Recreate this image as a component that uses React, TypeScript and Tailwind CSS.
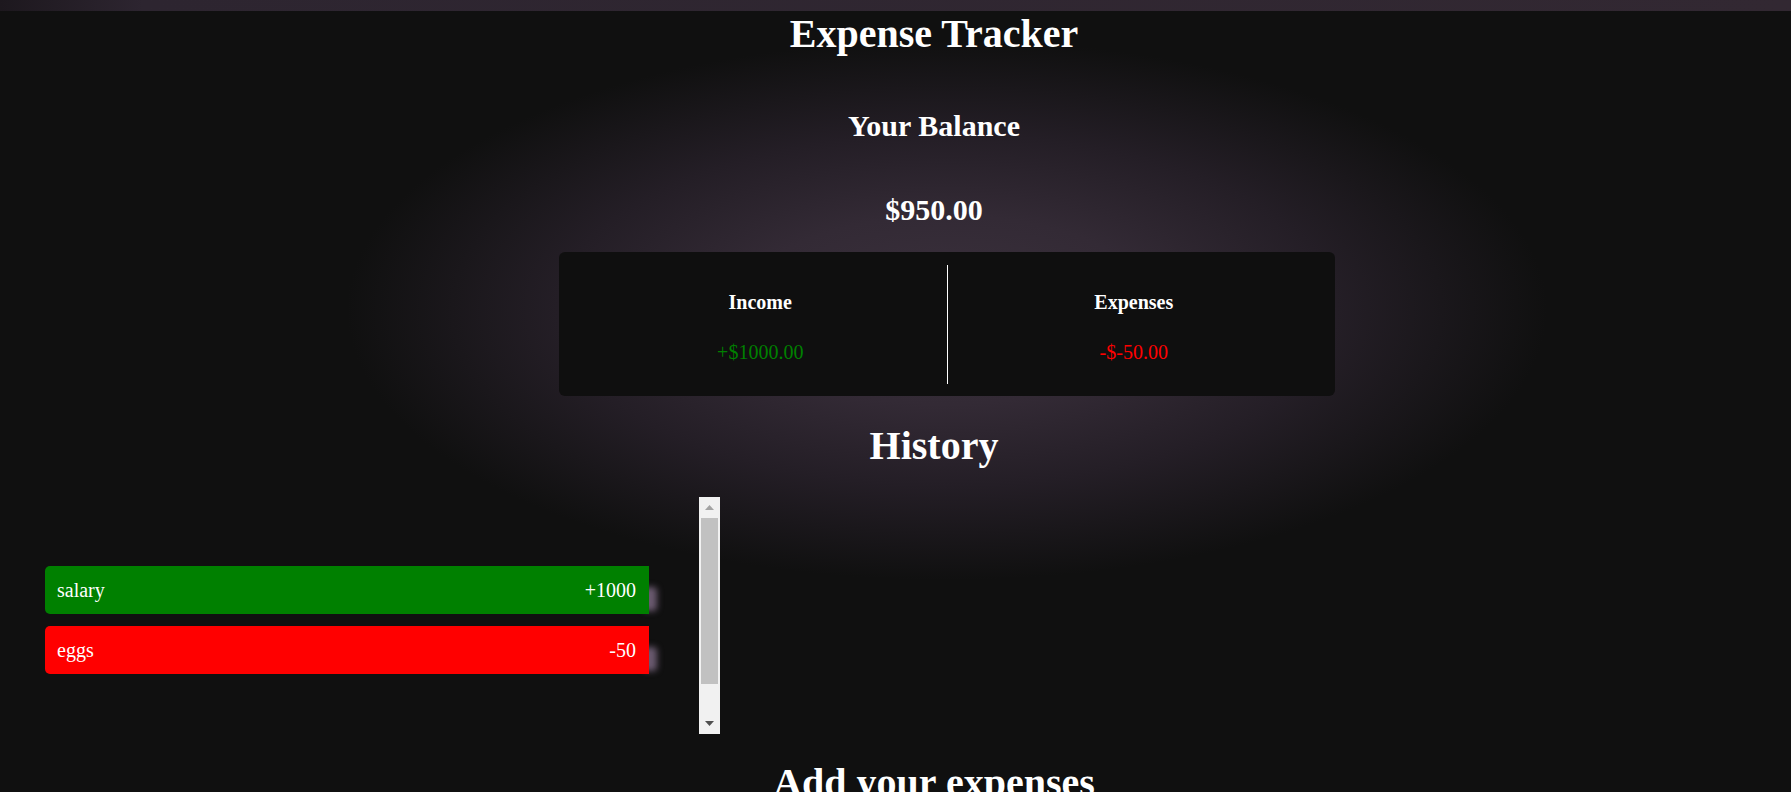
import React from "react";

const serif = { fontFamily: '"Liberation Serif", "Times New Roman", serif' };

function Item({ name, amount, color }: { name: string; amount: string; color: string }) {
  return (
    <div className="relative h-[48px] w-[604px]">
      <div className="absolute right-[-8px] top-[21px] h-[24px] w-[14px] rounded-sm bg-[#6a5a6f] blur-[3px]" />
      <div
        className={`relative z-10 flex h-full items-center justify-between rounded-l-[5px] pl-[12px] pr-[13px] text-[20px] text-white ${color}`}
      >
        <span>{name}</span>
        <span>{amount}</span>
      </div>
    </div>
  );
}

function FakeScrollbar() {
  return (
    <div className="flex h-[237px] w-[21px] flex-col items-center bg-[#f1f1f1]">
      <div className="flex h-[21px] w-full items-center justify-center">
        <svg width="9" height="5" viewBox="0 0 9 5">
          <polygon points="4.5,0 9,5 0,5" fill="#a3a3a3" />
        </svg>
      </div>
      <div className="h-[166px] w-[17px] bg-[#c1c1c1]" />
      <div className="flex-1" />
      <div className="flex h-[21px] w-full items-center justify-center">
        <svg width="9" height="5" viewBox="0 0 9 5">
          <polygon points="0,0 9,0 4.5,5" fill="#505050" />
        </svg>
      </div>
    </div>
  );
}

export default function App() {
  return (
    <div className="relative h-[792px] w-full overflow-hidden bg-[#101010] text-white" style={serif}>
      <div className="absolute inset-0 bg-[radial-gradient(ellipse_600px_270px_at_947px_310px,#3b313d_0%,#332a35_35%,#241e26_65%,#101010_100%)]" />
      <div className="relative flex flex-col">
        <div className="h-[11px] w-full bg-[linear-gradient(90deg,#1d181e_0%,#2d2530_8%,#322832_100%)]" />
        <div className="flex flex-col items-center pl-[77px]">
          <h1 className="text-[40px] font-bold leading-[46px]">Expense Tracker</h1>
          <h2 className="mt-[52px] text-[30px] font-bold leading-[34px]">Your Balance</h2>
          <h2 className="mt-[50px] text-[30px] font-bold leading-[34px]">$950.00</h2>
          <div className="ml-[26px] mt-[25px] flex h-[144px] w-[776px] rounded-[6px] bg-[#0f0f0f] px-[15px] pb-[12px] pt-[13px]">
            <div className="flex flex-1 flex-col items-center border-r border-white">
              <h4 className="mt-[26px] text-[20px] font-bold leading-[23px]">Income</h4>
              <p className="mt-[27px] text-[20px] leading-[23px] text-[#008000]">+$1000.00</p>
            </div>
            <div className="flex flex-1 flex-col items-center">
              <h4 className="mt-[26px] text-[20px] font-bold leading-[23px]">Expenses</h4>
              <p className="mt-[27px] text-[20px] leading-[23px] text-[#ff0000]">-$-50.00</p>
            </div>
          </div>
          <h1 className="mt-[27px] text-[40px] font-bold leading-[46px]">History</h1>
        </div>
        <div className="mt-[28px] flex h-[237px] pl-[45px]">
          <div className="flex w-[604px] flex-col gap-[12px] pt-[69px]">
            <Item name="salary" amount="+1000" color="bg-[#008000]" />
            <Item name="eggs" amount="-50" color="bg-[#ff0000]" />
          </div>
          <div className="ml-[50px]">
            <FakeScrollbar />
          </div>
        </div>
        <div className="mt-[26px] flex flex-col items-center pl-[77px]">
          <h1 className="text-[40px] font-bold leading-[46px]">Add your expenses</h1>
        </div>
      </div>
    </div>
  );
}
